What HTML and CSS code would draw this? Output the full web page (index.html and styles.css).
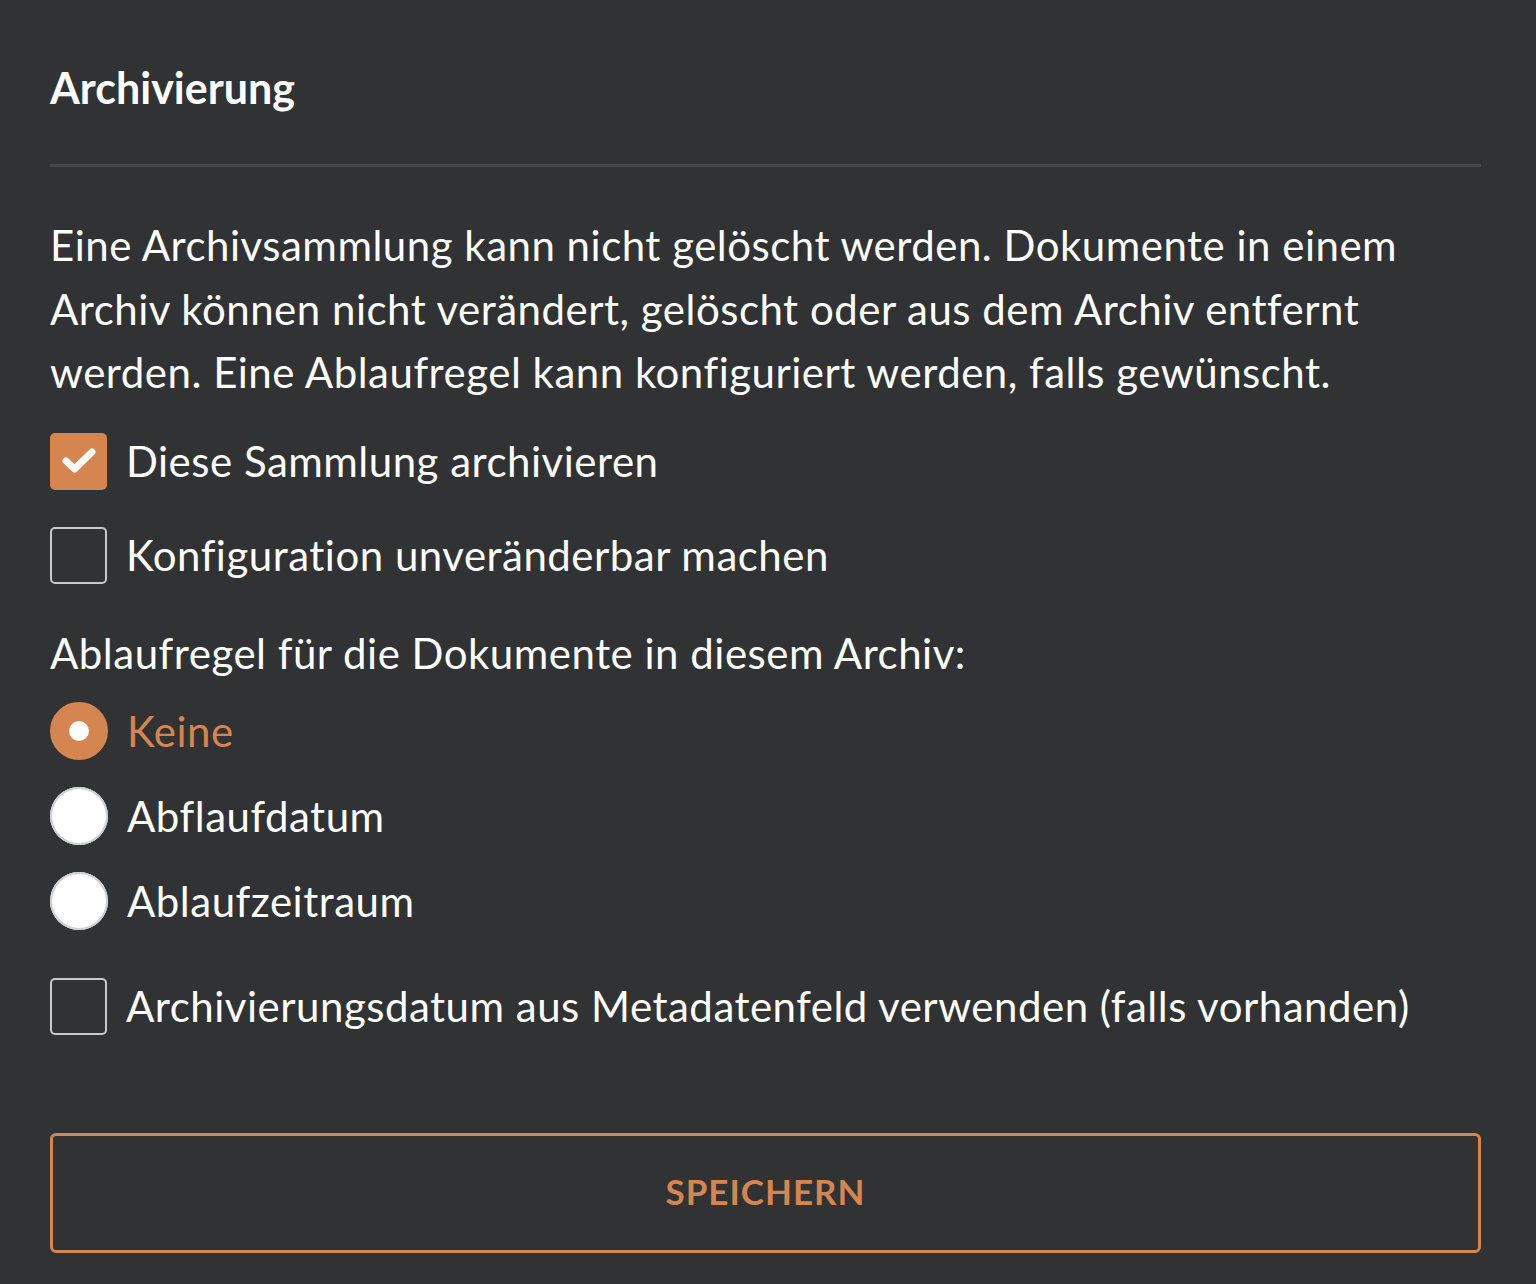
FILE: index.html
```html
<!DOCTYPE html>
<html>
<head>
    <link rel="stylesheet" href="styles.css">
</head>
<body>
<div class="panel">
  <h2 class="title">Archivierung</h2>
  <div class="divider"></div>

  <p class="intro">Eine Archivsammlung kann nicht gelöscht werden. Dokumente in einem Archiv können nicht verändert, gelöscht oder aus dem Archiv entfernt werden. Eine Ablaufregel kann konfiguriert werden, falls gewünscht.</p>

  <div class="options">
    <label class="check-row">
      <span class="box checked">
        <svg width="38" height="30" viewBox="0 0 38 30"><path d="M6 15 L14.5 23 L32 6" fill="none" stroke="#fff" stroke-width="7" stroke-linecap="round" stroke-linejoin="round"/></svg>
      </span>
      <span class="label">Diese Sammlung archivieren</span>
    </label>
    <label class="check-row">
      <span class="box"></span>
      <span class="label">Konfiguration unveränderbar machen</span>
    </label>
  </div>

  <div class="rule-title">Ablaufregel für die Dokumente in diesem Archiv:</div>

  <div class="radios">
    <label class="radio-row selected">
      <span class="dot"></span>
      <span class="label">Keine</span>
    </label>
    <label class="radio-row">
      <span class="dot"></span>
      <span class="label">Abflaufdatum</span>
    </label>
    <label class="radio-row">
      <span class="dot"></span>
      <span class="label">Ablaufzeitraum</span>
    </label>
  </div>

  <label class="check-row meta">
    <span class="box"></span>
    <span class="label">Archivierungsdatum aus Metadatenfeld verwenden (falls vorhanden)</span>
  </label>

  <button class="save">SPEICHERN</button>
</div>
</body>
</html>
```

FILE: styles.css
```css
body {
  margin: 0;
  background: #313234;
  font-family: Lato, "Open Sans", sans-serif;
  color: #fff;
}

.panel {
  padding: 0 55px 0 50px;
}

.title {
  font-size: 43px;
  font-weight: bold;
  margin: 0;
  padding-top: 62px;
  line-height: 52px;
}

.divider {
  height: 3px;
  background: #46474a;
  margin-top: 50px;
}

.intro,
.label,
.rule-title {
  font-size: 42px;
  letter-spacing: 0.5px;
}

.intro {
  line-height: 63.5px;
  margin: 47px 0 0;
}

.options {
  display: flex;
  flex-direction: column;
  gap: 37px;
  margin-top: 28px;
}

.check-row {
  display: flex;
  align-items: center;
  gap: 19px;
  height: 57px;
}

.box {
  box-sizing: border-box;
  width: 57px;
  height: 57px;
  border: 2px solid #c9c9ca;
  border-radius: 5px;
  display: flex;
  align-items: center;
  justify-content: center;
  flex-shrink: 0;
}

.box.checked {
  background: #d5854f;
  border-color: #d5854f;
}

.rule-title {
  line-height: 48px;
  margin-top: 45px;
}

.radios {
  display: flex;
  flex-direction: column;
  gap: 27px;
  margin-top: 25px;
}

.radio-row {
  display: flex;
  align-items: center;
  gap: 19px;
  height: 58px;
}

.dot {
  box-sizing: border-box;
  width: 58px;
  height: 58px;
  border-radius: 50%;
  background: #fff;
  box-shadow: inset 0 0 0 2px #cfcfd0;
  flex-shrink: 0;
}

.radio-row.selected .dot {
  box-shadow: none;
  border: 19px solid #d5854f;
  background-color: #fff;
}

.radio-row.selected .label {
  color: #d5854f;
}

.meta {
  margin-top: 48px;
}

.save {
  display: block;
  width: 100%;
  height: 120px;
  margin-top: 98px;
  padding-bottom: 4px;
  background: transparent;
  border: 3px solid #d5854f;
  border-radius: 6px;
  color: #d5854f;
  font-family: Lato, "Open Sans", sans-serif;
  font-size: 35px;
  font-weight: bold;
  letter-spacing: 1px;
}
```
